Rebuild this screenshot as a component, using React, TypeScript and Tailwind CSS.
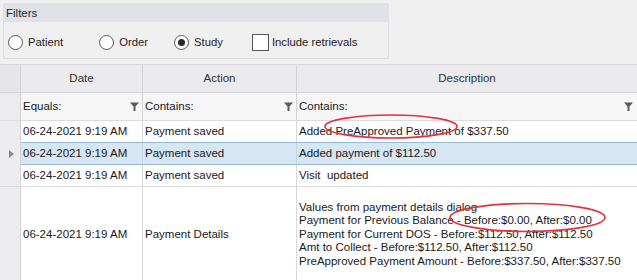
import React from "react";

const Funnel = () => (
  <svg width="9" height="9" viewBox="0 0 9 9" className="shrink-0">
    <path d="M0 0.5 H9 L5.5 4.5 V9 H3.5 V4.5 Z" fill="#5a5a5a" />
  </svg>
);

const Radio = ({ checked, label }: { checked?: boolean; label: string }) => (
  <div className="flex items-center">
    <div className="w-[15px] h-[15px] rounded-full border border-[#555] bg-white flex items-center justify-center">
      {checked && <div className="w-[7px] h-[7px] rounded-full bg-[#2a2a2a]" />}
    </div>
    <span className="ml-[5px] text-[11.3px] text-[#1e1e1e]">{label}</span>
  </div>
);

const rowCell = "flex items-center pl-[2px] border-r border-[#d9d9d9]";

export default function App() {
  return (
    <div className="relative w-[637px] h-[280px] overflow-hidden bg-[#f0f0f1] font-['Liberation_Sans',Arial,sans-serif] text-[11.5px] text-[#1a1a1a]">
      {/* Filters group */}
      <div className="ml-[3px] mt-[3px] w-[386px]">
        <div className="h-[19px] bg-[#dfe1e7] pl-[3px] pt-[1px] leading-[19px] text-[11.5px] text-[#222]">Filters</div>
        <div className="h-[37px] border border-t-0 border-[#dcdcdf] flex items-center pl-[4px] pt-[4px]">
          <Radio label="Patient" />
          <div className="ml-[36px]"><Radio label="Order" /></div>
          <div className="ml-[26px]"><Radio checked label="Study" /></div>
          <div className="ml-[29px] flex items-center">
            <div className="w-[17px] h-[17px] border border-[#555] bg-white" />
            <span className="ml-[3px] text-[11.3px]">Include retrievals</span>
          </div>
        </div>
      </div>

      {/* Grid */}
      <div className="mt-[5px] border-t border-[#d6d6d8] grid grid-cols-[21px_122px_154px_1fr]">
        {/* header */}
        <div className="h-[28px] bg-[#e6e6e8] border-r border-[#d2d2d4] border-b border-b-[#d6d6d8]" />
        <div className="h-[28px] bg-[#ebebed] border-r border-[#d2d2d4] border-b border-b-[#d6d6d8] flex items-center justify-center text-[#333]">Date</div>
        <div className="h-[28px] bg-[#ebebed] border-r border-[#d2d2d4] border-b border-b-[#d6d6d8] flex items-center justify-center text-[#333]">Action</div>
        <div className="h-[28px] bg-[#ebebed] border-b border-[#d6d6d8] flex items-center justify-center text-[#333]">Description</div>
        {/* filter row */}
        <div className="h-[28px] bg-[#ececee] border-r border-[#d2d2d4] border-b border-b-[#dcdcde]" />
        <div className="h-[28px] bg-[#f6f6f7] border-r border-[#d2d2d4] border-b border-b-[#dcdcde] flex items-center justify-between pl-[2px] pr-[3px]"><span>Equals:</span><Funnel /></div>
        <div className="h-[28px] bg-[#f6f6f7] border-r border-[#d2d2d4] border-b border-b-[#dcdcde] flex items-center justify-between pl-[2px] pr-[3px]"><span>Contains:</span><Funnel /></div>
        <div className="h-[28px] bg-[#f6f6f7] border-b border-[#dcdcde] flex items-center justify-between pl-[2px] pr-[4px]"><span>Contains:</span><Funnel /></div>
        {/* row 1 */}
        <div className="h-[21px] bg-[#ececee] border-r border-[#d2d2d4]" />
        <div className={`h-[21px] bg-white ${rowCell}`}>06-24-2021 9:19 AM</div>
        <div className={`h-[21px] bg-white ${rowCell}`}>Payment saved</div>
        <div className="h-[21px] bg-white flex items-center pl-[2px]">Added PreApproved Payment of $337.50</div>
        {/* row 2 selected */}
        <div className="h-[23px] bg-[#ececee] border-r border-[#d2d2d4] flex items-center pl-[9px]">
          <svg width="5" height="8" viewBox="0 0 5 8"><path d="M0 0 L5 4 L0 8 Z" fill="#8a8a8a" /></svg>
        </div>
        <div className="col-span-3 h-[23px] bg-[#d6e6f3] border-y border-[#98b9d6] grid grid-cols-[122px_154px_1fr]">
          <div className="flex items-center pl-[2px] border-r border-[#c4d4e2]">06-24-2021 9:19 AM</div>
          <div className="flex items-center pl-[2px] border-r border-[#c4d4e2]">Payment saved</div>
          <div className="flex items-center pl-[2px]">Added payment of $112.50</div>
        </div>
        {/* row 3 */}
        <div className="h-[22px] bg-[#ececee] border-r border-[#d2d2d4] border-b border-b-[#dcdcde]" />
        <div className={`h-[22px] bg-white ${rowCell} border-b border-b-[#dcdcde]`}>06-24-2021 9:19 AM</div>
        <div className={`h-[22px] bg-white ${rowCell} border-b border-b-[#dcdcde]`}>Payment saved</div>
        <div className="h-[22px] bg-white flex items-center pl-[2px] border-b border-[#dcdcde]">Visit&nbsp; updated</div>
        {/* row 4 */}
        <div className="h-[100px] bg-[#ececee] border-r border-[#d2d2d4]" />
        <div className={`h-[100px] bg-white ${rowCell} pb-[5px]`}>06-24-2021 9:19 AM</div>
        <div className={`h-[100px] bg-white ${rowCell} pb-[5px]`}>Payment Details</div>
        <div className="h-[100px] bg-white flex flex-col justify-center pl-[2px] leading-[13.6px] pb-[5px]">
          <div>Values from payment details dialog</div>
          <div>Payment for Previous Balance - Before:$0.00, After:$0.00</div>
          <div>Payment for Current DOS - Before:$112.50, After:$112.50</div>
          <div>Amt to Collect - Before:$112.50, After:$112.50</div>
          <div>PreApproved Payment Amount - Before:$337.50, After:$337.50</div>
        </div>
      </div>

      {/* Red annotation ellipses */}
      <svg className="absolute left-0 top-0 pointer-events-none" width="637" height="280">
        <ellipse cx="391" cy="126.5" rx="66" ry="11.5" fill="none" stroke="#e3323c" strokeWidth="1.6" />
        <ellipse cx="527.5" cy="217.5" rx="77.5" ry="14" fill="none" stroke="#e3323c" strokeWidth="1.6" />
      </svg>
    </div>
  );
}
